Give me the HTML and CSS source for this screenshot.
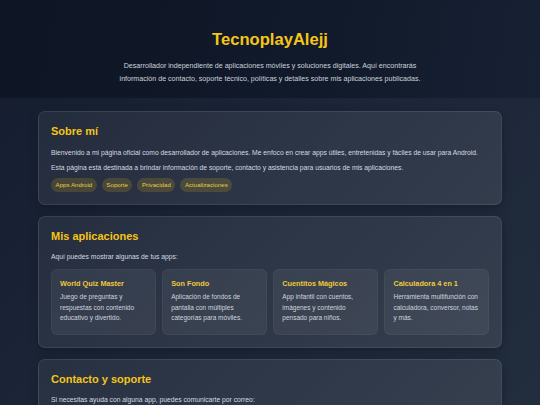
FILE: index.html
```html
<!DOCTYPE html>
<html lang="es">
<head>
<meta charset="utf-8">
<title>TecnoplayAlejj</title>
<link rel="stylesheet" href="styles.css">
</head>
<body>
<header class="hero">
  <h1 class="hero-title">TecnoplayAlejj</h1>
  <p class="hero-sub">Desarrollador independiente de aplicaciones móviles y soluciones digitales. Aquí encontrarás información de contacto, soporte técnico, políticas y detalles sobre mis aplicaciones publicadas.</p>
</header>
<main class="content">
  <section class="card">
    <h2 class="card-title">Sobre mí</h2>
    <p class="text first">Bienvenido a mi página oficial como desarrollador de aplicaciones. Me enfoco en crear apps útiles, entretenidas y fáciles de usar para Android.</p>
    <p class="text">Esta página está destinada a brindar información de soporte, contacto y asistencia para usuarios de mis aplicaciones.</p>
    <div class="tags">
      <span class="tag">Apps Android</span>
      <span class="tag">Soporte</span>
      <span class="tag">Privacidad</span>
      <span class="tag">Actualizaciones</span>
    </div>
  </section>
  <section class="card">
    <h2 class="card-title">Mis aplicaciones</h2>
    <p class="text first">Aquí puedes mostrar algunas de tus apps:</p>
    <div class="apps">
      <div class="app">
        <h3 class="app-title">World Quiz Master</h3>
        <p class="app-desc">Juego de preguntas y respuestas con contenido educativo y divertido.</p>
      </div>
      <div class="app">
        <h3 class="app-title">Son Fondo</h3>
        <p class="app-desc">Aplicación de fondos de pantalla con múltiples categorías para móviles.</p>
      </div>
      <div class="app">
        <h3 class="app-title">Cuentitos Mágicos</h3>
        <p class="app-desc">App infantil con cuentos, imágenes y contenido pensado para niños.</p>
      </div>
      <div class="app">
        <h3 class="app-title">Calculadora 4 en 1</h3>
        <p class="app-desc">Herramienta multifunción con calculadora, conversor, notas y más.</p>
      </div>
    </div>
  </section>
  <section class="card">
    <h2 class="card-title">Contacto y soporte</h2>
    <p class="text first">Si necesitas ayuda con alguna app, puedes comunicarte por correo:</p>
    <p class="text">soporte@tecnoplayalejj.com</p>
  </section>
</main>
</body>
</html>
```

FILE: styles.css
```css
* { box-sizing: border-box; }
html, body { margin: 0; padding: 0; }
body {
  font-family: "Liberation Sans", Arial, sans-serif;
  background: linear-gradient(135deg, #141c2e 0%, #1c2638 50%, #222d3e 100%);
  background-attachment: fixed;
  color: #d4d9e1;
  min-height: 405px;
}
.hero {
  background: linear-gradient(100deg, #0e1524 0%, #111a2b 60%, #172133 100%);
  text-align: center;
  padding: 30px 20px 18px;
  height: 98px;
}
.hero-title {
  margin: 0;
  font-size: 16.6px;
  line-height: 20px;
  font-weight: 700;
  color: #f5c518;
}
.hero-sub {
  margin: 10px auto 0;
  max-width: 312px;
  font-size: 7.1px;
  line-height: 13px;
  color: #cdd2da;
}
.content {
  max-width: 464px;
  margin: 13px auto 0;
  display: flex;
  flex-direction: column;
  gap: 10.5px;
}
.card {
  background: linear-gradient(135deg, rgba(255,255,255,0.06), rgba(255,255,255,0.09));
  border: 1px solid rgba(255,255,255,0.09);
  border-radius: 7px;
  padding: 12px 12px 12px;
  box-shadow: 0 3px 10px rgba(0,0,0,0.25);
}
.card-title {
  margin: 0;
  font-size: 11px;
  line-height: 14px;
  font-weight: 700;
  color: #f5c518;
}
.text {
  margin: 4px 0 0;
  font-size: 6.75px;
  line-height: 11px;
  color: #d4d9e1;
}
.text.first { margin-top: 8.5px; }
.tags {
  display: flex;
  gap: 5px;
  margin-top: 5.5px;
}
.tag {
  display: inline-block;
  height: 14px;
  line-height: 14px;
  padding: 0 4.5px;
  border-radius: 7px;
  font-size: 6.2px;
  color: #e9c94a;
  background: rgba(245,197,24,0.16);
}
.apps {
  display: grid;
  grid-template-columns: repeat(4, 1fr);
  gap: 6.6px;
  margin-top: 7px;
}
.app {
  background: rgba(255,255,255,0.06);
  border: 1px solid rgba(255,255,255,0.04);
  border-radius: 6px;
  padding: 7.5px 8px 10px;
}
.app-title {
  margin: 0;
  font-size: 7.3px;
  line-height: 11px;
  font-weight: 700;
  color: #f0c93a;
}
.app-desc {
  margin: 3.5px 0 0;
  font-size: 6.5px;
  line-height: 10.7px;
  color: #cfd5de;
}
```
